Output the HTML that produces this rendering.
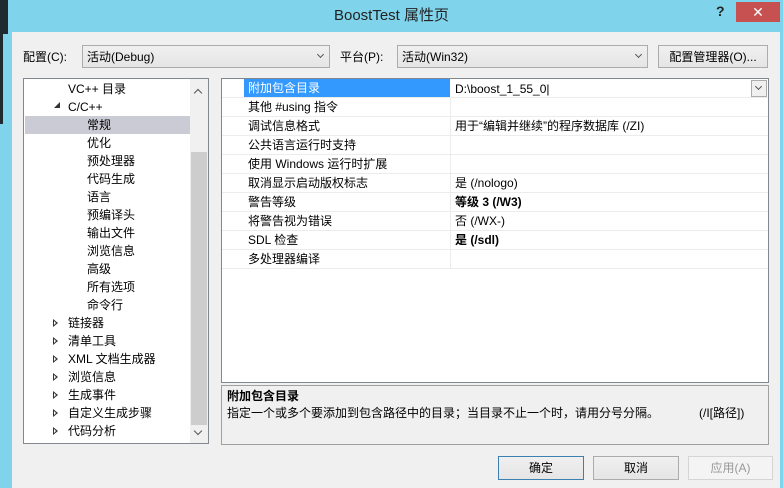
<!DOCTYPE html>
<html><head><meta charset="utf-8"><style>
*{box-sizing:border-box;margin:0;padding:0}
body{width:783px;height:488px;overflow:hidden;background:#7fd4ec;font-family:"Liberation Sans","Noto Sans CJK SC",sans-serif;font-size:12px;color:#000;position:relative}
.a{position:absolute}
.t{white-space:nowrap;line-height:18px}
.combo{border:1px solid #acacac;background:linear-gradient(#f0f0f0,#e5e5e5);height:23px}
.btn{border:1px solid #acacac;background:linear-gradient(#f0f0f0,#e5e5e5);height:24px;text-align:center;line-height:22px}
.row{position:absolute;left:0;width:546px;height:19px;border-bottom:1px solid #ececec}
.row .n{position:absolute;left:22px;width:206px;height:18px;padding-left:4px;line-height:18px;white-space:nowrap}
.row .v{position:absolute;left:228px;width:318px;height:18px;padding-left:4px;line-height:18px;border-left:1px solid #ececec;white-space:nowrap}
.ti{position:absolute;white-space:nowrap;line-height:18px}
.tri{position:absolute;left:29px;width:0;height:0;border-top:4px solid transparent;border-bottom:4px solid transparent;border-left:5px solid #333}
.tri:after{content:"";position:absolute;left:-4px;top:-2px;border-top:2px solid transparent;border-bottom:2px solid transparent;border-left:2px solid #fff}
.chev{position:absolute;right:6px;top:6px;width:7px;height:7px;border-right:2px solid #555;border-bottom:2px solid #555;transform:rotate(45deg)}
</style></head><body>
<div class="a" style="left:0;top:0;width:8px;height:34px;background:#1e2a30"></div>
<div class="a" style="left:0;top:34px;width:3px;height:90px;background:#1e2a30"></div>
<div class="a t" style="left:0;top:5px;width:783px;text-align:center;font-size:15px;color:#222;line-height:22px">BoostTest 属性页</div>
<div class="a" style="left:716px;top:3px;font-weight:bold;font-size:14px;color:#222">?</div>
<div class="a" style="left:736px;top:2px;width:44px;height:20px;background:#c75050;color:#fff;text-align:center;font-size:14px;line-height:20px">✕</div>
<div class="a" style="left:12px;top:32px;width:768px;height:456px;background:#f0f0f0"></div>

<div class="a t" style="left:23px;top:48px">配置(C):</div>
<div class="a combo" style="left:82px;top:45px;width:248px"><span class="a t" style="left:4px;top:2px">活动(Debug)</span><span class="chev" style="width:5px;height:5px;top:6px;border-width:1.5px"></span></div>
<div class="a t" style="left:340px;top:48px">平台(P):</div>
<div class="a combo" style="left:397px;top:45px;width:251px"><span class="a t" style="left:4px;top:2px">活动(Win32)</span><span class="chev" style="width:5px;height:5px;top:6px;border-width:1.5px"></span></div>
<div class="a btn" style="left:658px;top:45px;width:110px;height:23px">配置管理器(O)...</div>

<!-- tree -->
<div class="a" style="left:23px;top:78px;width:186px;height:366px;border:1px solid #828790;background:#fff">
 <div class="a" style="left:166px;top:0;width:18px;height:364px;background:#f0f0f0"></div>
 <div class="a" style="left:167px;top:73px;width:16px;height:273px;background:#cdcdcd"></div>
 <div class="a" style="left:171px;top:11px;width:6px;height:6px;border-left:1.5px solid #555;border-top:1.5px solid #555;transform:rotate(45deg)"></div>
 <div class="a" style="left:171px;top:349px;width:6px;height:6px;border-right:1.5px solid #555;border-bottom:1.5px solid #555;transform:rotate(45deg)"></div>
 <div class="a" style="left:1px;top:37px;width:165px;height:18px;background:#cbcbd6"></div>
 <div class="ti" style="left:44px;top:1px">VC++ 目录</div>
 <div class="a" style="left:30px;top:23px;border-left:6px solid transparent;border-bottom:6px solid #333"></div>
 <div class="ti" style="left:44px;top:19px">C/C++</div>
 <div class="ti" style="left:63px;top:37px">常规</div>
 <div class="ti" style="left:63px;top:55px">优化</div>
 <div class="ti" style="left:63px;top:73px">预处理器</div>
 <div class="ti" style="left:63px;top:91px">代码生成</div>
 <div class="ti" style="left:63px;top:109px">语言</div>
 <div class="ti" style="left:63px;top:127px">预编译头</div>
 <div class="ti" style="left:63px;top:145px">输出文件</div>
 <div class="ti" style="left:63px;top:163px">浏览信息</div>
 <div class="ti" style="left:63px;top:181px">高级</div>
 <div class="ti" style="left:63px;top:199px">所有选项</div>
 <div class="ti" style="left:63px;top:217px">命令行</div>
 <div class="tri" style="top:240px"></div><div class="ti" style="left:44px;top:235px">链接器</div>
 <div class="tri" style="top:258px"></div><div class="ti" style="left:44px;top:253px">清单工具</div>
 <div class="tri" style="top:276px"></div><div class="ti" style="left:44px;top:271px">XML 文档生成器</div>
 <div class="tri" style="top:294px"></div><div class="ti" style="left:44px;top:289px">浏览信息</div>
 <div class="tri" style="top:312px"></div><div class="ti" style="left:44px;top:307px">生成事件</div>
 <div class="tri" style="top:330px"></div><div class="ti" style="left:44px;top:325px">自定义生成步骤</div>
 <div class="tri" style="top:348px"></div><div class="ti" style="left:44px;top:343px">代码分析</div>
</div>

<!-- grid -->
<div class="a" style="left:221px;top:78px;width:548px;height:305px;border:1px solid #828790;background:#fff;overflow:hidden">
 <div class="row" style="top:0"><div class="n" style="background:#3399ff;color:#fff">附加包含目录</div><div class="v" style="border:1px solid #fff">D:\boost_1_55_0|</div><div class="a" style="left:529px;top:1px;width:16px;height:17px;border:1px solid #acacac;background:#f0f0f0"><span class="a" style="left:4px;top:3px;width:5px;height:5px;border-right:1.5px solid #555;border-bottom:1.5px solid #555;transform:rotate(45deg)"></span></div></div>
 <div class="row" style="top:19px"><div class="n">其他 #using 指令</div><div class="v"></div></div>
 <div class="row" style="top:38px"><div class="n">调试信息格式</div><div class="v">用于“编辑并继续”的程序数据库 (/ZI)</div></div>
 <div class="row" style="top:57px"><div class="n">公共语言运行时支持</div><div class="v"></div></div>
 <div class="row" style="top:76px"><div class="n">使用 Windows 运行时扩展</div><div class="v"></div></div>
 <div class="row" style="top:95px"><div class="n">取消显示启动版权标志</div><div class="v">是 (/nologo)</div></div>
 <div class="row" style="top:114px"><div class="n">警告等级</div><div class="v" style="font-weight:bold">等级 3 (/W3)</div></div>
 <div class="row" style="top:133px"><div class="n">将警告视为错误</div><div class="v">否 (/WX-)</div></div>
 <div class="row" style="top:152px"><div class="n">SDL 检查</div><div class="v" style="font-weight:bold">是 (/sdl)</div></div>
 <div class="row" style="top:171px"><div class="n">多处理器编译</div><div class="v"></div></div>
</div>

<div class="a" style="left:221px;top:385px;width:548px;height:60px;border:1px solid #a0a0a0;background:#f0f0f0">
 <div class="ti" style="left:5px;top:1px;font-weight:bold">附加包含目录</div>
 <div class="ti" style="left:5px;top:18px">指定一个或多个要添加到包含路径中的目录；当目录不止一个时，请用分号分隔。</div>
 <div class="ti" style="left:477px;top:18px">(/I[路径])</div>
</div>

<div class="a btn" style="left:498px;top:456px;width:86px;border-color:#3c7fb1">确定</div>
<div class="a btn" style="left:593px;top:456px;width:86px">取消</div>
<div class="a btn" style="left:688px;top:456px;width:85px;color:#999;background:#f4f4f4;border-color:#d5d5d5">应用(A)</div>
</body></html>
